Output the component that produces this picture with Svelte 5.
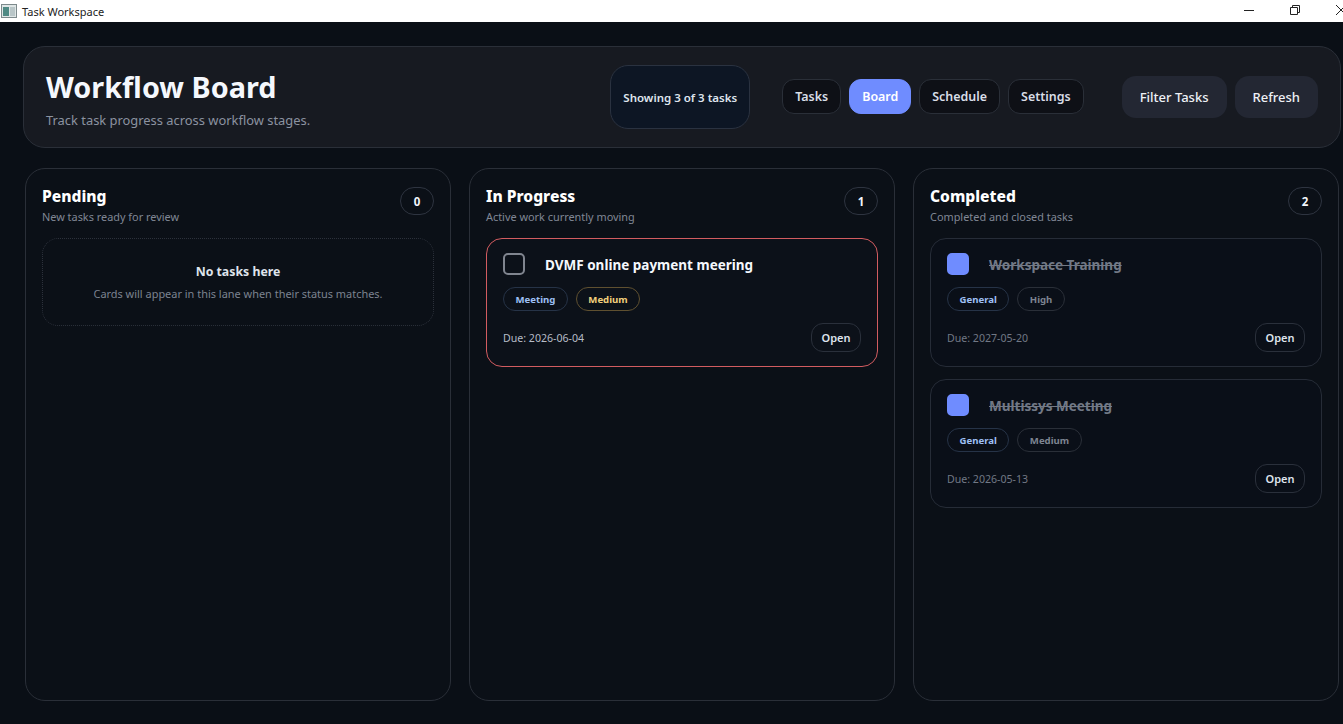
<script>
  const nav = ["Tasks", "Board", "Schedule", "Settings"];
  const lanes = [
    { title: "Pending", sub: "New tasks ready for review", tasks: [] },
    {
      title: "In Progress",
      sub: "Active work currently moving",
      tasks: [{ name: "DVMF online payment meering", type: "Meeting", priority: "Medium", due: "2026-06-04", done: false }]
    },
    {
      title: "Completed",
      sub: "Completed and closed tasks",
      tasks: [
        { name: "Workspace Training", type: "General", priority: "High", due: "2027-05-20", done: true },
        { name: "Multissys Meeting", type: "General", priority: "Medium", due: "2026-05-13", done: true }
      ]
    }
  ];
</script>

<div class="window">
  <div class="titlebar">
    <svg class="app-icon" width="16" height="14" viewBox="0 0 16 14">
      <rect x="0.5" y="0.5" width="15" height="13" fill="#dfe6e6" stroke="#7d8a8c" />
      <rect x="2" y="3" width="6" height="9" fill="#4f8a84" />
      <rect x="9" y="3" width="5" height="9" fill="#b9c6c8" />
    </svg>
    <span class="app-name">Task Workspace</span>
    <div class="win-controls">
      <svg width="12" height="12" viewBox="0 0 12 12"><path d="M1 6.5h10" stroke="#222" fill="none" /></svg>
      <svg width="12" height="12" viewBox="0 0 12 12"><path d="M1.5 3.5h7v7h-7zM3.5 3.5v-2h7v7h-2" stroke="#222" fill="none" /></svg>
      <svg width="12" height="12" viewBox="0 0 12 12"><path d="M1 1l10 10M11 1L1 11" stroke="#222" fill="none" /></svg>
    </div>
  </div>

  <main>
    <header>
      <div class="heading">
        <h1>Workflow Board</h1>
        <p>Track task progress across workflow stages.</p>
      </div>
      <div class="showing">Showing 3 of 3 tasks</div>
      <nav>
        {#each nav as item}
          <button class:active={item === "Board"}>{item}</button>
        {/each}
      </nav>
      <div class="actions">
        <button>Filter Tasks</button>
        <button>Refresh</button>
      </div>
    </header>

    <section class="board">
      {#each lanes as lane}
        <div class="lane">
          <div class="lane-head">
            <div>
              <h2>{lane.title}</h2>
              <p>{lane.sub}</p>
            </div>
            <span class="count">{lane.tasks.length}</span>
          </div>

          {#if lane.tasks.length === 0}
            <div class="empty">
              <strong>No tasks here</strong>
              <span>Cards will appear in this lane when their status matches.</span>
            </div>
          {/if}

          {#each lane.tasks as task}
            <article class="card" class:done={task.done}>
              <div class="card-top">
                <span class="check"></span>
                <h3>{task.name}</h3>
              </div>
              <div class="tags">
                <span class="tag type">{task.type}</span>
                <span class="tag priority">{task.priority}</span>
              </div>
              <div class="card-foot">
                <span class="due">Due: {task.due}</span>
                <button class="open">Open</button>
              </div>
            </article>
          {/each}
        </div>
      {/each}
    </section>
  </main>
</div>

<style>
  :global(body) {
    margin: 0;
    background: #0a0f16;
  }

  .window {
    height: 724px;
    overflow: hidden;
    display: flex;
    flex-direction: column;
    font-family: "Noto Sans", "Open Sans", sans-serif;
    color: #f3f6fb;
  }

  button {
    font-family: inherit;
    cursor: pointer;
  }

  .titlebar {
    height: 22px;
    flex: none;
    background: #fff;
    display: flex;
    align-items: center;
    padding-left: 1px;
    color: #222;
    font-size: 11px;
  }

  .app-name {
    margin-left: 5px;
  }

  .win-controls {
    margin-left: auto;
    display: flex;
    gap: 34px;
    margin-right: -4px;
    margin-bottom: 3px;
  }

  main {
    flex: 1;
    min-height: 0;
    padding: 24px 2px 23px 23px;
    display: flex;
    flex-direction: column;
    gap: 20px;
    background: #0a0f16;
  }

  header {
    height: 102px;
    box-sizing: border-box;
    flex: none;
    display: flex;
    align-items: center;
    padding: 0 22px;
    background: #171a21;
    border: 1px solid #2a2f38;
    border-radius: 22px;
  }

  .heading {
    flex: 1;
    padding-top: 2px;
  }

  h1 {
    margin: 0;
    font-size: 28.8px;
    line-height: 40px;
    font-weight: 700;
    color: #f5f8fd;
  }

  .heading p {
    margin: 4px 0 0;
    font-size: 12.9px;
    line-height: 18px;
    color: #8b92a0;
  }

  .showing {
    width: 140px;
    height: 64px;
    box-sizing: border-box;
    display: flex;
    align-items: center;
    justify-content: center;
    background: #0d1624;
    border: 1px solid #2a3240;
    border-radius: 18px;
    font-size: 11.5px;
    font-weight: 600;
    color: #dfe5ee;
  }

  nav {
    display: flex;
    gap: 8px;
    margin-left: 32px;
    margin-bottom: 2px;
  }

  nav button {
    height: 35px;
    padding: 1px 12px 0;
    background: #0e1016;
    border: 1px solid #2a2f38;
    border-radius: 12px;
    color: #d9dee7;
    font-size: 12.45px;
    font-weight: 600;
  }

  nav button.active {
    background: #6f8cff;
    border-color: #6f8cff;
    color: #fff;
  }

  .actions {
    display: flex;
    gap: 8px;
    margin-left: 38px;
  }

  .actions button {
    height: 42px;
    padding: 0 18px;
    background: #232733;
    border: none;
    border-radius: 14px;
    color: #eef1f6;
    font-size: 13px;
    font-weight: 500;
  }

  .board {
    flex: 1;
    min-height: 0;
    display: grid;
    grid-template-columns: repeat(3, 426px);
    gap: 18px;
    padding-left: 2px;
  }

  .lane {
    box-sizing: border-box;
    padding: 16px;
    background: #0b1017;
    border: 1px solid #2a2f38;
    border-radius: 20px;
    display: flex;
    flex-direction: column;
    gap: 12px;
  }

  .lane-head {
    display: flex;
    justify-content: space-between;
    align-items: flex-start;
    height: 41px;
  }

  h2 {
    margin: 1px 0 0;
    font-size: 15.6px;
    line-height: 20px;
    font-weight: 800;
    color: #fff;
  }

  .lane-head p {
    margin: 3px 0 0;
    font-size: 10.9px;
    line-height: 15px;
    color: #808795;
  }

  .count {
    width: 34px;
    height: 28px;
    margin-top: 2px;
    box-sizing: border-box;
    display: flex;
    align-items: center;
    justify-content: center;
    border: 1px solid #2e3440;
    border-radius: 14px;
    font-size: 11.5px;
    font-weight: 700;
    color: #f3f6fb;
  }

  .empty {
    height: 88px;
    box-sizing: border-box;
    display: flex;
    flex-direction: column;
    align-items: center;
    justify-content: center;
    gap: 6px;
    border: 1px dotted #2c313b;
    border-radius: 16px;
  }

  .empty strong {
    font-size: 12.3px;
    font-weight: 700;
    color: #dfe4ec;
  }

  .empty span {
    font-size: 10.95px;
    color: #7c8390;
  }

  .card {
    height: 129px;
    box-sizing: border-box;
    padding: 14px 16px;
    background: #0c1119;
    border: 1px solid #d25c60;
    border-radius: 16px;
    display: flex;
    flex-direction: column;
  }

  .card.done {
    background: #0a0f18;
    border-color: #262c37;
  }

  .card-top {
    display: flex;
    align-items: center;
    gap: 20px;
    height: 22px;
  }

  .check {
    width: 22px;
    height: 22px;
    box-sizing: border-box;
    border: 2px solid #80858f;
    border-radius: 5px;
  }

  .done .check {
    background: #6f8cff;
    border-color: #6f8cff;
  }

  h3 {
    margin: 2px 0 0;
    font-size: 13.5px;
    font-weight: 700;
    color: #f5f8fd;
  }

  .done h3 {
    color: #727986;
    text-decoration: line-through;
  }

  .tags {
    display: flex;
    gap: 8px;
    margin-top: 12px;
  }

  .tag {
    height: 24px;
    box-sizing: border-box;
    display: flex;
    align-items: center;
    padding: 0 11.5px;
    border: 1px solid #2a3342;
    border-radius: 12px;
    font-size: 9.6px;
    font-weight: 700;
  }

  .tag.type {
    color: #9fc0f5;
    border-color: #263347;
  }

  .tag.priority {
    color: #f2cf7c;
    border-color: #5f5030;
  }

  .done .tag.priority {
    color: #7d8491;
    border-color: #2a2f38;
  }

  .card-foot {
    margin-top: auto;
    display: flex;
    align-items: center;
    justify-content: space-between;
  }

  .due {
    font-size: 10.6px;
    color: #b6bcc7;
  }

  .done .due {
    color: #717885;
  }

  .open {
    height: 29px;
    width: 50px;
    padding: 0;
    background: transparent;
    border: 1px solid #2a303b;
    border-radius: 12px;
    color: #dfe4ec;
    font-size: 11px;
    font-weight: 600;
  }
</style>
